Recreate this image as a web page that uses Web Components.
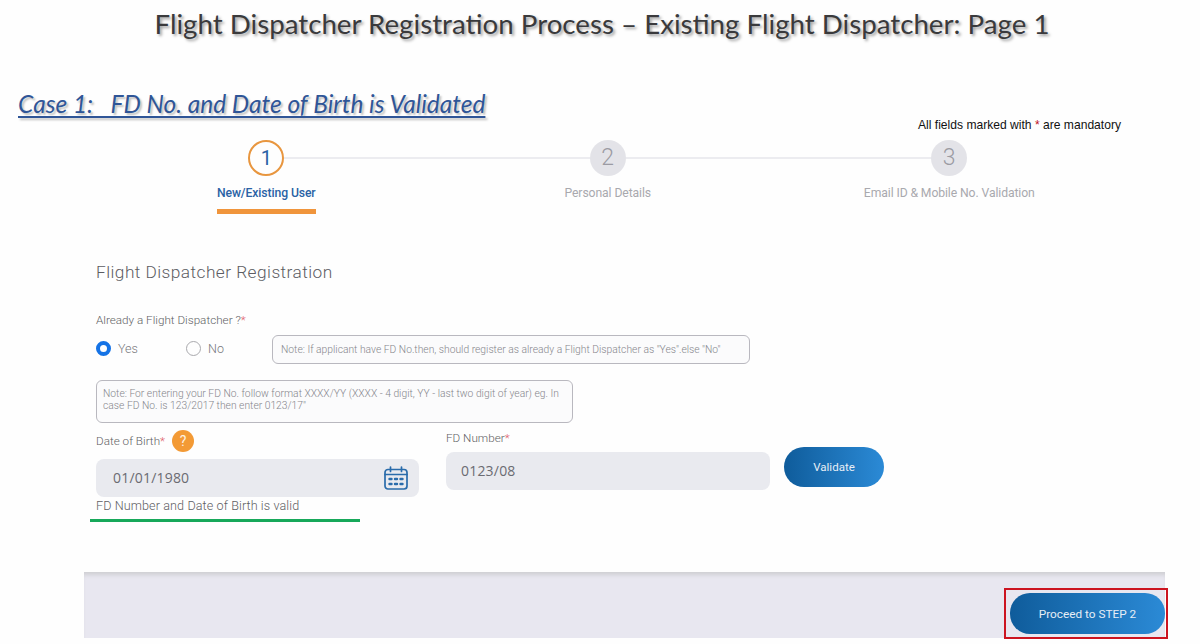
<!DOCTYPE html>
<html lang="en">
<head>
<meta charset="utf-8">
<title>Flight Dispatcher Registration Process</title>
<style>
  html, body { margin: 0; height: 100%; }
  body { background: #fefefe; width: 1200px; height: 644px; overflow: hidden; font-family: Roboto, sans-serif; }
</style>
</head>
<body>
<slide-title>Flight Dispatcher Registration Process – Existing Flight Dispatcher: Page 1</slide-title>
<case-heading>Case 1:&nbsp;&nbsp; FD No. and Date of Birth is Validated</case-heading>
<mandatory-note></mandatory-note>
<step-tracker>
  <step-item num="1" active first>New/Existing User</step-item>
  <step-item num="2">Personal Details</step-item>
  <step-item num="3" last>Email ID &amp; Mobile No. Validation</step-item>
</step-tracker>
<registration-form></registration-form>
<form-footer>Proceed to STEP 2</form-footer>

<script>
class SlideTitle extends HTMLElement {
  constructor() {
    super();
    this.attachShadow({ mode: "open" });
    this.shadowRoot.innerHTML = `
    <style>
      :host { display: block; height: 48px; text-align: center; padding-left: 4px;
        font: 400 27.7px/48px Lato, sans-serif; color: #3a3a3c; white-space: nowrap;
        text-shadow: 2px 2px 3px rgba(0,0,0,.38); }
    </style>
    <slot></slot>`;
  }
}
customElements.define("slide-title", SlideTitle);

class CaseHeading extends HTMLElement {
  constructor() {
    super();
    this.attachShadow({ mode: "open" });
    this.shadowRoot.innerHTML = `
    <style>
      :host { display: block; margin: 40px 0 0 18px; height: 32px;
        font: italic 400 24.5px/32px Lato, sans-serif; color: #2f5597; white-space: nowrap;
        text-decoration: underline; text-decoration-thickness: 2px; text-underline-offset: 3px;
        text-shadow: 2px 2px 2px rgba(0,0,0,.25); }
    </style>
    <slot></slot>`;
  }
}
customElements.define("case-heading", CaseHeading);

class MandatoryNote extends HTMLElement {
  constructor() {
    super();
    this.attachShadow({ mode: "open" });
    this.shadowRoot.innerHTML = `
    <style>
      :host { display: block; height: 14px; margin-top: -2px; padding-right: 79px; text-align: right;
        font: 12.1px/14px "Liberation Sans", sans-serif; color: #111; }
      b { font-weight: 400; color: #c0121f; }
    </style>
    All fields marked with <b>*</b> are mandatory`;
  }
}
customElements.define("mandatory-note", MandatoryNote);

class StepTracker extends HTMLElement {
  constructor() {
    super();
    this.attachShadow({ mode: "open" });
    this.shadowRoot.innerHTML = `
    <style>
      :host { display: grid; grid-template-columns: repeat(3, 341.5px); margin: 7px 0 0 95.5px; }
    </style>
    <slot></slot>`;
  }
}
customElements.define("step-tracker", StepTracker);

class StepItem extends HTMLElement {
  constructor() {
    super();
    this.attachShadow({ mode: "open" });
    this.shadowRoot.innerHTML = `
    <style>
      :host { display: flex; flex-direction: column; align-items: center; }
      .head { display: flex; align-items: center; width: 100%; height: 37px; }
      .line { flex: 1; height: 2px; background: #ececf0; }
      :host([first]) .line.l, :host([last]) .line.r { background: transparent; }
      .circle { width: 36px; height: 36px; box-sizing: border-box; border-radius: 50%; background: #e3e3e8;
        display: flex; align-items: center; justify-content: center;
        font: 300 23px/1 Roboto, sans-serif; color: #9b9ba3; }
      :host([active]) .circle { background: #fefefe; border: 2px solid #e8963f; color: #2a62a5;
        font-weight: 400; font-size: 20px; }
      .label { margin-top: 10px; padding-bottom: 9px; border-bottom: 5px solid transparent;
        font: 400 12.2px/14px Roboto, sans-serif; letter-spacing: -.1px; color: #a9a9ae; white-space: nowrap; }
      :host([active]) .label { color: #2a62a5; font-weight: 500; border-bottom-color: #f0953c; }
    </style>
    <div class="head">
      <span class="line l"></span><span class="circle"></span><span class="line r"></span>
    </div>
    <div class="label"><slot></slot></div>`;
    this.shadowRoot.querySelector(".circle").textContent = this.getAttribute("num");
  }
}
customElements.define("step-item", StepItem);

class NoteBox extends HTMLElement {
  constructor() {
    super();
    this.attachShadow({ mode: "open" });
    this.shadowRoot.innerHTML = `
    <style>
      :host { display: block; box-sizing: border-box; border: 1px solid #b9b8bf; border-radius: 6px;
        background: #fbfbfc; padding: 7px 6px; font: 300 10.3px/12px Roboto, sans-serif; color: #86868c; }
    </style>
    <slot></slot>`;
  }
}
customElements.define("note-box", NoteBox);

class RadioOption extends HTMLElement {
  constructor() {
    super();
    this.attachShadow({ mode: "open" });
    this.shadowRoot.innerHTML = `
    <style>
      :host { display: inline-flex; align-items: center; gap: 7px; font: 300 12.5px/16px Roboto, sans-serif; color: #77777c; }
      i { width: 15px; height: 15px; box-sizing: border-box; border-radius: 50%; border: 1px solid #a9a9ad; background: #fefefe; }
      :host([checked]) i { border: 4px solid #1573e6; }
    </style>
    <i></i><slot></slot>`;
  }
}
customElements.define("radio-option", RadioOption);

class TextField extends HTMLElement {
  constructor() {
    super();
    this.attachShadow({ mode: "open" });
    this.shadowRoot.innerHTML = `
    <style>
      :host { display: flex; align-items: center; justify-content: space-between; box-sizing: border-box;
        height: 38px; border-radius: 8px; background: #e9eaef; padding: 0 11px 0 15px;
        font: 400 14px/18px "Open Sans", sans-serif; color: #6b6b72; letter-spacing: .2px; }
    </style>
    <slot></slot><slot name="icon"></slot>`;
  }
}
customElements.define("text-field", TextField);

class PillButton extends HTMLElement {
  constructor() {
    super();
    this.attachShadow({ mode: "open" });
    this.shadowRoot.innerHTML = `
    <style>
      :host { display: flex; align-items: center; justify-content: center; box-sizing: border-box;
        border-radius: 20px; background: linear-gradient(90deg, #0f5c9b, #2b8ad6);
        font: 400 11.5px/16px Roboto, sans-serif; color: #e6eef6; white-space: nowrap; }
    </style>
    <slot></slot>`;
  }
}
customElements.define("pill-button", PillButton);

class RegistrationForm extends HTMLElement {
  constructor() {
    super();
    this.attachShadow({ mode: "open" });
    this.shadowRoot.innerHTML = `
    <style>
      :host { display: block; height: 358px; margin-left: 96px; color: #6f6f74; }
      h2 { margin: 0; padding-top: 47px; font: 300 17.3px/22px Roboto, sans-serif; letter-spacing: .45px; color: #5c5c62; }
      .lbl { font: 300 11.7px/14px Roboto, sans-serif; color: #5f5f64; }
      .lbl b { font-weight: 300; color: #e0606a; }
      .ask { margin-top: 30px; }
      .choice { display: flex; align-items: center; height: 29px; margin-top: 8px; }
      .yes { width: 90px; margin-bottom: 2px; }
      .no { width: 86px; margin-bottom: 2px; }
      .short { width: 478px; height: 29px; padding: 0 8px; line-height: 28px; white-space: nowrap; }
      .long { width: 477px; height: 43px; margin-top: 16px; }
      .fields { display: grid; grid-template-columns: 323px 324px 100px; column-gap: 27px; margin-top: 6px; }
      .fields > div { display: flex; flex-direction: column; }
      .fields > div:nth-child(3) { margin-left: -13px; }
      .dob { display: flex; align-items: center; gap: 7px; height: 24px; }
      .help { width: 22px; height: 22px; border-radius: 50%; background: #f39a35; color: #fdf1e2;
        display: flex; align-items: center; justify-content: center; font: 400 14px/1 Roboto, sans-serif; }
      .dob + text-field { margin-top: 6px; padding-left: 17px; }
      .fdl { height: 14px; margin-top: 2px; }
      .fdl + text-field { margin-top: 7px; }
      .validate { width: 100px; height: 40px; margin-top: 18px; }
      .valid { margin-top: 1px; font: 300 12.6px/16px Roboto, sans-serif; color: #5f5f64; letter-spacing: .1px; }
      .rule { width: 270px; height: 3px; margin: 5px 0 0 -6px; background: #17a85a; }
      svg { display: block; }
    </style>
    <h2>Flight Dispatcher Registration</h2>
    <div class="lbl ask">Already a Flight Dispatcher ?<b>*</b></div>
    <div class="choice">
      <radio-option class="yes" checked>Yes</radio-option>
      <radio-option class="no">No</radio-option>
      <note-box class="short">Note: If applicant have FD No.then, should register as already a Flight Dispatcher as "Yes".else "No"</note-box>
    </div>
    <note-box class="long">Note: For entering your FD No. follow format XXXX/YY (XXXX - 4 digit, YY - last two digit of year) eg. In case FD No. is 123/2017 then enter 0123/17"</note-box>
    <div class="fields">
      <div>
        <div class="lbl dob"><span>Date of Birth<b>*</b></span><span class="help">?</span></div>
        <text-field>01/01/1980
          <svg slot="icon" width="24" height="24" viewBox="0 0 24 24" fill="none" stroke="#2a6cab" stroke-width="1.7" stroke-linecap="round">
            <rect x="1" y="3.5" width="22" height="19.5" rx="3"/>
            <path d="M1 8.5h22M6.5 1v4.5M17.5 1v4.5"/>
            <path stroke-width="2.4" d="M5.5 13h2M11 13h2M16.5 13h2M5.5 18h2M11 18h2M16.5 18h2"/>
          </svg>
        </text-field>
        <div class="valid">FD Number and Date of Birth is valid</div>
        <div class="rule"></div>
      </div>
      <div>
        <div class="lbl fdl">FD Number<b>*</b></div>
        <text-field>0123/08</text-field>
      </div>
      <div><pill-button class="validate">Validate</pill-button></div>
    </div>`;
  }
}
customElements.define("registration-form", RegistrationForm);

class FormFooter extends HTMLElement {
  constructor() {
    super();
    this.attachShadow({ mode: "open" });
    this.shadowRoot.innerHTML = `
    <style>
      :host { display: flex; justify-content: flex-end; align-items: flex-end; box-sizing: border-box;
        width: 1081px; height: 66px; margin-left: 84px; background: #e8e7f0;
        box-shadow: inset 0 5px 4px -2px #cfcfd3; }
      .mark { box-sizing: border-box; width: 164px; height: 51px; margin: 0 -3px -1px 0; padding: 3px 1px 3px 4px;
        border: 2px solid #cc1420; }
      pill-button { height: 41px; font-size: 11.8px; }
    </style>
    <div class="mark"><pill-button><slot></slot></pill-button></div>`;
  }
}
customElements.define("form-footer", FormFooter);
</script>
</body>
</html>
